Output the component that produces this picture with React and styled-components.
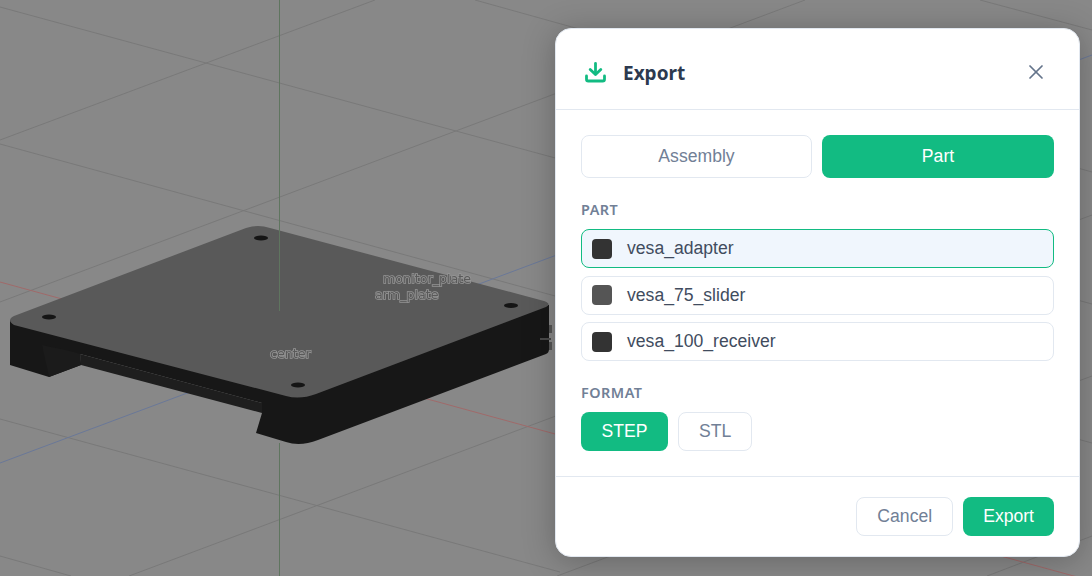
import React, { useState } from "react";
import styled, { createGlobalStyle } from "styled-components";
import { X } from "lucide-react";

const PARTS = [
  { name: "vesa_adapter", color: "#333333" },
  { name: "vesa_75_slider", color: "#555555" },
  { name: "vesa_100_receiver", color: "#333333" },
];

const GRID = [
  [0, 7, 1092, 304],
  [0, 140, 375, 0],
  [0, 144, 1092, 443],
  [0, 302, 805, 0],
  [475, 0, 1092, 172],
  [980, 0, 1092, 30],
  [0, 419, 560, 572],
  [129, 576, 1092, 215],
  [557, 576, 1092, 376],
  [987, 576, 1092, 536],
  [0, 556, 71, 576],
];

const Scene = () => (
  <SceneSvg viewBox="0 0 1092 576" aria-hidden="true">
    {GRID.map(([x1, y1, x2, y2], i) => (
      <line key={i} x1={x1} y1={y1} x2={x2} y2={y2} stroke="#797979" strokeWidth="1" />
    ))}
    <line x1="0" y1="282" x2="1092" y2="581" stroke="#a06a6a" strokeWidth="1" />
    <line x1="0" y1="463" x2="1092" y2="55" stroke="#6a7898" strokeWidth="1" />
    <line x1="279.5" y1="443" x2="279.5" y2="576" stroke="#5f755f" strokeWidth="1" />

    <rect x="548" y="325" width="4" height="8" fill="#555555" />
    <rect x="548" y="342" width="4" height="8" fill="#555555" />
    <path d="M10 320 L10 365 L49 377 L81 365 L80 354 L262 403 L262 413 L256 433 L286 442 Q300 447 318 440 L546 354 Q549 353 549 349 L549 305 Z" fill="#171717" />
    <path d="M42 345 L49 377 L81 365 L80 354 L74 352 Z" fill="#1b1b1b" />
    <path d="M80 354 L262 403 L262 413 L81 365 Z" fill="#1e1e1e" />
    <rect x="540" y="338" width="11" height="2" fill="#4a4a4a" />
    <path d="M14 316 L246 228 Q258 224 270 228 L544 301 Q552 304 546 307 L316 394 Q300 400 286 396 L14 325 Q6 320 14 316 Z" fill="#595959" />
    <ellipse cx="49" cy="317" rx="7" ry="2.6" fill="#151515" />
    <ellipse cx="261" cy="238" rx="7" ry="2.6" fill="#151515" />
    <ellipse cx="511" cy="305.5" rx="7" ry="2.6" fill="#151515" />
    <ellipse cx="298" cy="385" rx="7" ry="2.6" fill="#151515" />

    <line x1="279.5" y1="0" x2="279.5" y2="311" stroke="#5f755f" strokeWidth="1" />

    <SceneLabel x="383" y="283">monitor_plate</SceneLabel>
    <SceneLabel x="375" y="299">arm_plate</SceneLabel>
    <SceneLabel x="270" y="358">center</SceneLabel>
  </SceneSvg>
);

const ExportIcon = () => (
  <svg width="21" height="21" viewBox="0 0 21 21" fill="none" stroke="#12bb82" strokeWidth="2.8" strokeLinecap="round" strokeLinejoin="round">
    <path d="M10.5 1.5V12" />
    <path d="M5.2 7.4 L10.5 12.6 L15.8 7.4" />
    <path d="M1.5 14V17.2a1.8 1.8 0 0 0 1.8 1.8H17.7a1.8 1.8 0 0 0 1.8-1.8V14" />
  </svg>
);

const App = () => {
  const [mode, setMode] = useState("part");
  const [selected, setSelected] = useState("vesa_adapter");
  const [format, setFormat] = useState("step");

  return (
    <Stage>
      <GlobalStyle />
      <Scene />
      <Overlay>
        <Dialog>
          <DialogHeader>
            <DialogTitle>
              <ExportIcon />
              <h2>Export</h2>
            </DialogTitle>
            <CloseButton aria-label="Close">
              <X size={24} strokeWidth={1.7} />
            </CloseButton>
          </DialogHeader>

          <DialogBody>
            <ModeRow>
              <ChoiceButton $active={mode === "assembly"} onClick={() => setMode("assembly")}>
                Assembly
              </ChoiceButton>
              <ChoiceButton $active={mode === "part"} onClick={() => setMode("part")}>
                Part
              </ChoiceButton>
            </ModeRow>

            <SectionLabel>Part</SectionLabel>
            <PartList>
              {PARTS.map((part) => (
                <PartRow
                  key={part.name}
                  $selected={selected === part.name}
                  onClick={() => setSelected(part.name)}
                >
                  <Swatch $color={part.color} />
                  {part.name}
                </PartRow>
              ))}
            </PartList>

            <SectionLabel>Format</SectionLabel>
            <FormatRow>
              <FormatButton $active={format === "step"} onClick={() => setFormat("step")}>
                STEP
              </FormatButton>
              <FormatButton $active={format === "stl"} onClick={() => setFormat("stl")}>
                STL
              </FormatButton>
            </FormatRow>
          </DialogBody>

          <DialogFooter>
            <FormatButton>Cancel</FormatButton>
            <FormatButton $active>Export</FormatButton>
          </DialogFooter>
        </Dialog>
      </Overlay>
    </Stage>
  );
};

const GlobalStyle = createGlobalStyle`
  html, body {
    margin: 0;
    padding: 0;
    overflow: hidden;
  }
  body {
    font-family: "Liberation Sans", Arial, sans-serif;
  }
  button {
    font-family: inherit;
  }
`;

const Stage = styled.div`
  position: relative;
  width: 100%;
  height: 100vh;
  overflow: hidden;
  background-color: #888888;
`;

const SceneSvg = styled.svg`
  position: absolute;
  inset: 0;
  width: 100%;
  height: 100%;
  filter: blur(0.7px);
`;

const SceneLabel = styled.text`
  font-family: "DejaVu Sans", sans-serif;
  font-size: 12.7px;
  fill: #5a5a5a;
  stroke: #969696;
  stroke-width: 1.6px;
  paint-order: stroke;
`;

const Overlay = styled.div`
  position: absolute;
  inset: 0;
  display: flex;
  justify-content: flex-end;
  align-items: flex-start;
  padding: 28px 12px 0 0;
`;

const Dialog = styled.div`
  box-sizing: border-box;
  width: 525px;
  background-color: #fff;
  border: 1px solid #e2e8f0;
  border-radius: 16px;
  box-shadow: 0 4px 32px rgba(0, 0, 0, 0.25);
  overflow: hidden;
`;

const DialogHeader = styled.div`
  box-sizing: border-box;
  display: flex;
  justify-content: space-between;
  align-items: center;
  height: 81px;
  padding: 6px 27.5px 0 29px;
  border-bottom: 1px solid #e2e8f0;
`;

const DialogTitle = styled.div`
  display: flex;
  align-items: center;
  gap: 17px;
  > h2 {
    margin: 2px 0 0;
    font-family: "Noto Sans", sans-serif;
    font-size: 19px;
    font-weight: 700;
    color: #2d3a4f;
  }
`;

const CloseButton = styled.button`
  display: flex;
  align-items: center;
  justify-content: center;
  width: 32px;
  height: 32px;
  padding: 0;
  border: none;
  background: none;
  color: #64748b;
  cursor: pointer;
`;

const DialogBody = styled.div`
  padding: 25px;
`;

const ModeRow = styled.div`
  display: grid;
  grid-template-columns: 231px 1fr;
  gap: 10px;
  margin-bottom: 22px;
`;

const ChoiceButton = styled.button`
  height: 43px;
  padding: 0;
  border: ${(props) => (props.$active ? "none" : "1px solid #e2e8f0")};
  border-radius: 8px;
  background-color: ${(props) => (props.$active ? "#12bb82" : "#fff")};
  color: ${(props) => (props.$active ? "#fff" : "#718096")};
  font-size: 17.6px;
  cursor: pointer;
`;

const SectionLabel = styled.div`
  margin-bottom: 9px;
  font-family: "Noto Sans", sans-serif;
  font-size: 14.4px;
  line-height: 20px;
  font-weight: 600;
  letter-spacing: 0.5px;
  text-transform: uppercase;
  color: #718096;
`;

const PartList = styled.div`
  display: flex;
  flex-direction: column;
  gap: 7.5px;
  margin-bottom: 22px;
`;

const PartRow = styled.div`
  display: flex;
  align-items: center;
  gap: 15px;
  height: 39px;
  box-sizing: border-box;
  padding: 0 10px;
  border: 1px solid ${(props) => (props.$selected ? "#12bb82" : "#e2e8f0")};
  border-radius: 8px;
  background-color: ${(props) => (props.$selected ? "#f0f6fd" : "#fff")};
  color: #414c5e;
  font-size: 17.6px;
  cursor: pointer;
`;

const Swatch = styled.span`
  width: 20px;
  height: 20px;
  border-radius: 4px;
  background-color: ${(props) => props.$color};
`;

const FormatRow = styled.div`
  display: flex;
  gap: 10px;
  > :first-child {
    min-width: 87px;
  }
`;

const FormatButton = styled.button`
  height: 39px;
  padding: 0 20px;
  border: ${(props) => (props.$active ? "none" : "1px solid #e2e8f0")};
  border-radius: 8px;
  background-color: ${(props) => (props.$active ? "#12bb82" : "#fff")};
  color: ${(props) => (props.$active ? "#fff" : "#718096")};
  font-size: 17.6px;
  cursor: pointer;
`;

const DialogFooter = styled.div`
  display: flex;
  justify-content: flex-end;
  gap: 10px;
  padding: 20px 25px;
  border-top: 1px solid #e2e8f0;
`;

export default App;
